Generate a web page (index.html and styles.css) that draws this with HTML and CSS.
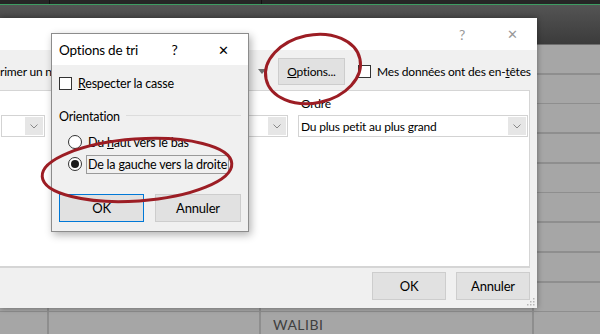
FILE: index.html
```html
<!DOCTYPE html>
<html lang="fr">
<head>
    <meta charset="UTF-8">
    <title>Options de tri</title>
    <link rel="stylesheet" href="styles.css">
</head>
<body>
    <div class="screen">
        <div class="ribbon"></div>
        <div class="grid"></div>
        <span class="cell-text">WALIBI</span>

        <section class="sort-dialog">
            <div class="caption inactive">
                <span class="cap-btn">?</span>
                <span class="cap-btn close">&#x2715;</span>
            </div>
            <div class="toolbar">
                <span class="tb-left">rimer un niveau</span>
                <span class="tb-arrow"><i class="tri"></i></span>
                <button class="btn options-btn"><u>O</u>ptions...</button>
                <label class="check-line headers">
                    <span class="box"></span>
                    <span>Mes données ont des en-<u>t</u>êtes</span>
                </label>
            </div>
            <div class="level-list">
                <div class="list-head">
                    <span></span>
                    <span></span>
                    <span class="head-label">Ordre</span>
                </div>
                <div class="list-row">
                    <div class="combo"><span class="combo-text"></span><span class="chev"></span></div>
                    <div class="combo"><span class="combo-text"></span><span class="chev"></span></div>
                    <div class="combo"><span class="combo-text">Du plus petit au plus grand</span><span class="chev"></span></div>
                </div>
            </div>
            <div class="footer">
                <button class="btn dlg-btn">OK</button>
                <button class="btn dlg-btn">Annuler</button>
            </div>
            <svg class="grip" width="8" height="8" viewBox="0 0 8 8">
                <rect x="6" y="0" width="1.5" height="1.5" fill="#b5b5b5"/>
                <rect x="3" y="3" width="1.5" height="1.5" fill="#b5b5b5"/>
                <rect x="6" y="3" width="1.5" height="1.5" fill="#b5b5b5"/>
                <rect x="0" y="6" width="1.5" height="1.5" fill="#b5b5b5"/>
                <rect x="3" y="6" width="1.5" height="1.5" fill="#b5b5b5"/>
                <rect x="6" y="6" width="1.5" height="1.5" fill="#b5b5b5"/>
            </svg>
        </section>

        <section class="options-dialog">
            <div class="caption">
                <span class="cap-title">Options de tri</span>
                <span class="cap-btn small">?</span>
                <span class="cap-btn small close">&#x2715;</span>
            </div>
            <div class="opt-body">
                <label class="check-line case">
                    <span class="box"></span>
                    <span><u>R</u>especter la casse</span>
                </label>
                <div class="group-title"><span>Orientation</span></div>
                <div class="radios">
                    <label class="radio-line"><span class="radio"></span><span>Du <u>h</u>aut vers le bas</span></label>
                    <label class="radio-line"><span class="radio checked"></span><span class="focus">De la <u>g</u>auche vers la droite</span></label>
                </div>
                <div class="opt-buttons">
                    <button class="btn default">OK</button>
                    <button class="btn">Annuler</button>
                </div>
            </div>
        </section>

        <svg class="marks" width="600" height="334" viewBox="0 0 600 334">
            <ellipse cx="313" cy="69" rx="48" ry="34" transform="rotate(-12 313 69)" fill="none" stroke="#9c1d24" stroke-width="3"/>
            <ellipse cx="137" cy="170" rx="95" ry="31" transform="rotate(-4 137 170)" fill="none" stroke="#9c1d24" stroke-width="3"/>
        </svg>
    </div>
</body>
</html>
```

FILE: styles.css
```css
:root {
    --face: #f0f0f0;
    --btn-bg: #e1e1e1;
    --btn-border: #cdcdcd;
    --cell: #a6a6a6;
    --cell-line: #8e8e8e;
    --mark: #9c1d24;
}
body {
    margin: 0;
    padding: 0;
    background: var(--cell);
    font-family: Lato, 'Noto Sans', Arial, sans-serif;
    font-size: 12px;
    letter-spacing: -0.2px;
    color: #000;
}
.screen {
    position: relative;
    width: 600px;
    height: 334px;
    overflow: hidden;
    display: flex;
    flex-direction: column;
}
.ribbon {
    height: 45px;
    background:
        linear-gradient(to right, transparent 49px, #111 49px 50px, transparent 50px 261px, #111 261px 262px, transparent 262px) top / 100% 4px no-repeat,
        linear-gradient(to bottom, #262626 0 4px, #3d9c62 4px 5px, #545454 5px, #3b3b3b 44px, #6e6e6e 44px 45px);
}
.grid {
    flex: 1;
    background:
        linear-gradient(to right, transparent 47px, var(--cell-line) 47px 49px, transparent 49px 259px, var(--cell-line) 259px 261px, transparent 261px 532px, var(--cell-line) 532px 534px, transparent 534px),
        repeating-linear-gradient(to bottom, transparent 0 28px, var(--cell-line) 28px 29.7px),
        var(--cell);
}
.cell-text {
    position: absolute;
    left: 273px;
    top: 316px;
    font-size: 14px;
    letter-spacing: 0.5px;
    color: #3f3f3f;
}

/* big "Tri" dialog, inactive behind the options box */
.sort-dialog {
    position: absolute;
    left: 0;
    top: 18px;
    width: 537px;
    height: 290px;
    background: var(--face);
    display: flex;
    flex-direction: column;
    box-shadow: 0 0 6px rgba(0, 0, 0, 0.4);
}
.caption {
    height: 32px;
    background: #fff;
    display: flex;
    align-items: center;
    justify-content: flex-end;
    flex-shrink: 0;
}
.cap-btn {
    width: 50px;
    flex-shrink: 0;
    text-align: center;
    font-size: 14px;
}
.cap-btn.close {
    font-size: 13px;
}
.caption.inactive .cap-btn {
    color: #999;
}
.toolbar {
    height: 38px;
    box-sizing: border-box;
    padding-top: 5px;
    display: flex;
    align-items: center;
    flex-shrink: 0;
}
.toolbar > * {
    flex-shrink: 0;
}
.tb-left {
    width: 252px;
    white-space: nowrap;
    overflow: hidden;
}
.tb-arrow {
    width: 20px;
    display: flex;
    justify-content: center;
}
.tri {
    width: 0;
    height: 0;
    border-left: 4px solid transparent;
    border-right: 4px solid transparent;
    border-top: 5px solid #6d6d6d;
}
.btn {
    background: var(--btn-bg);
    border: 1px solid var(--btn-border);
    font-family: inherit;
    font-size: 12px;
    letter-spacing: -0.2px;
    color: #000;
    padding: 0;
}
.options-btn {
    width: 67px;
    height: 27px;
    margin-left: 6px;
}
.check-line {
    display: flex;
    align-items: center;
    gap: 6px;
    white-space: nowrap;
}
.box {
    width: 11px;
    height: 11px;
    border: 1px solid #333;
    background: #fff;
    flex-shrink: 0;
}
.headers {
    margin-left: 13px;
}
.level-list {
    flex: 1;
    margin: 2px 7px 0 -1px;
    background: #fff;
    border: 1px solid #d5d5d5;
    border-bottom-width: 2px;
}
.list-head,
.list-row {
    display: grid;
    grid-template-columns: 44px 233px 230px;
    column-gap: 10px;
    padding-left: 1px;
}
.list-head {
    height: 24px;
    align-items: center;
}
.head-label {
    padding-left: 3px;
}
.combo {
    height: 22px;
    box-sizing: border-box;
    border: 1px solid #d3d3d3;
    display: flex;
    align-items: center;
}
.combo-text {
    flex: 1;
    padding-left: 2px;
    white-space: nowrap;
    overflow: hidden;
}
.chev {
    width: 18px;
    height: 18px;
    margin-right: 1px;
    background: #e6e6e6 url("data:image/svg+xml,%3Csvg xmlns='http://www.w3.org/2000/svg' width='8' height='5'%3E%3Cpath d='M0.5 0.5 L4 4 L7.5 0.5' fill='none' stroke='%23888' stroke-width='1'/%3E%3C/svg%3E") center no-repeat;
}
.footer {
    height: 40px;
    box-sizing: border-box;
    padding: 4px 7px 0;
    display: flex;
    justify-content: flex-end;
    align-items: flex-start;
    gap: 10px;
    flex-shrink: 0;
}
.dlg-btn {
    width: 74px;
    height: 28px;
    font-size: 13px;
}
.grip {
    position: absolute;
    right: 2px;
    bottom: 2px;
}

/* "Options de tri" box */
.options-dialog {
    position: absolute;
    left: 51px;
    top: 33px;
    width: 198px;
    height: 199px;
    box-sizing: border-box;
    border: 1px solid #8c8c8c;
    background: var(--face);
    box-shadow: 2px 3px 8px rgba(0, 0, 0, 0.3);
}
.options-dialog .caption {
    height: 31px;
}
.cap-title {
    flex: 1;
    padding-left: 7px;
    font-size: 13.5px;
    white-space: nowrap;
}
.cap-btn.small {
    width: 49px;
}
.opt-body {
    padding: 10px 7px 0;
}
.case {
    height: 17px;
    font-size: 12.5px;
}
.group-title {
    margin-top: 15px;
    height: 18px;
    display: flex;
    align-items: center;
    gap: 6px;
    font-size: 12.5px;
}
.group-title::after {
    content: "";
    flex: 1;
    height: 1px;
    background: #dcdcdc;
    margin-top: -2px;
}
.radios {
    margin-top: 6px;
    padding-left: 9px;
}
.radio-line {
    height: 22px;
    display: flex;
    align-items: center;
    gap: 4px;
    font-size: 12.5px;
    white-space: nowrap;
}
.radio {
    width: 12px;
    height: 12px;
    border: 1px solid #333;
    border-radius: 50%;
    background: #fff;
    margin-right: 2px;
    display: flex;
    align-items: center;
    justify-content: center;
    flex-shrink: 0;
}
.radio.checked::after {
    content: "";
    width: 8px;
    height: 8px;
    border-radius: 50%;
    background: #1a1a1a;
}
.focus {
    border: 1px solid #9a9a9a;
    padding: 1px 1px;
    margin-left: -2px;
}
.opt-buttons {
    margin-top: 19px;
    display: flex;
    gap: 11px;
}
.opt-buttons .btn {
    width: 86px;
    height: 28px;
    font-size: 13px;
}
.opt-buttons .default {
    width: 85px;
    border: 1px solid #0078d7;
}

.marks {
    position: absolute;
    left: 0;
    top: 0;
    pointer-events: none;
}
```
